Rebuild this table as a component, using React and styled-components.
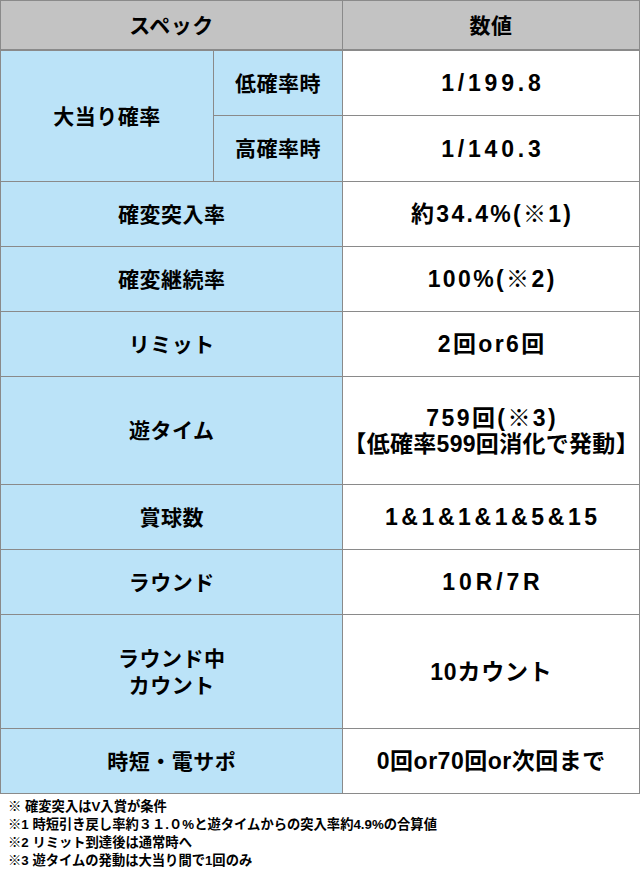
import React from "react";
import styled, { createGlobalStyle } from "styled-components";

const Global = createGlobalStyle`
  html, body { margin: 0; padding: 0; background: #fff; }
  body { font-family: "Liberation Sans", "Noto Sans CJK JP", sans-serif; color: #000; }
`;

const Page = styled.div`
  width: 640px;
`;

const Table = styled.div`
  box-sizing: border-box;
  width: 640px;
  display: grid;
  grid-template-columns: 213px 129px 297px;
  grid-template-rows: 50px 65px 66px 65px 65px 65px 108px 65px 65px 114px 65px;
  border-top: 1px solid #8a8a8a;
  border-left: 1px solid #8a8a8a;
`;

const bg = { head: "#c3c3c3", label: "#bbe3f8", value: "#ffffff" };

const Cell = styled.div`
  box-sizing: border-box;
  display: flex;
  flex-direction: column;
  align-items: center;
  justify-content: center;
  text-align: center;
  grid-column: ${(p) => p.$col || "auto"};
  grid-row: ${(p) => p.$row || "auto"};
  background: ${(p) => bg[p.$kind]};
  border-right: 1px solid #8a8a8a;
  border-bottom: ${(p) => (p.$kind === "head" ? "2px" : "1px")} solid #8a8a8a;
  font-weight: bold;
  font-size: ${(p) => (p.$kind === "value" ? "23px" : "21px")};
  line-height: ${(p) => (p.$kind === "value" ? "26px" : "27px")};
  letter-spacing: 0.5px;
`;

const Line = styled.span`
  display: block;
  letter-spacing: ${(p) => p.$ls ?? 0.5}px;
  margin-right: ${(p) => -(p.$ls ?? 0.5)}px;
`;

const Notes = styled.div`
  padding: 4px 0 0 8px;
  font-size: 13.3px;
  line-height: 18px;
  font-weight: bold;
`;

const rows = [
  [["確変突入率"], [["約34.4%(※1)", 2.3]]],
  [["確変継続率"], [["100%(※2)", 2.4]]],
  [["リミット"], [["2回or6回", 2.4]]],
  [["遊タイム"], [["759回(※3)", 2.4], ["【低確率599回消化で発動】", 0.3]]],
  [["賞球数"], [["1&1&1&1&5&15", 3.6]]],
  [["ラウンド"], [["10R/7R", 3.9]]],
  [["ラウンド中", "カウント"], [["10カウント", 0.8]]],
  [["時短・電サポ"], [["0回or70回or次回まで", 0.5]]],
];

const notes = [
  "※ 確変突入はV入賞が条件",
  "※1 時短引き戻し率約３１.０%と遊タイムからの突入率約4.9%の合算値",
  "※2 リミット到達後は通常時へ",
  "※3 遊タイムの発動は大当り間で1回のみ",
];

export default function App() {
  return (
    <Page>
      <Global />
      <Table>
        <Cell $kind="head" $col="1 / 3">スペック</Cell>
        <Cell $kind="head">数値</Cell>
        <Cell $kind="label" $col="1" $row="2 / 4">大当り確率</Cell>
        <Cell $kind="label" $col="2" $row="2">低確率時</Cell>
        <Cell $kind="value" $col="3" $row="2">
          <Line $ls={3.8}>1/199.8</Line>
        </Cell>
        <Cell $kind="label" $col="2" $row="3">高確率時</Cell>
        <Cell $kind="value" $col="3" $row="3">
          <Line $ls={3.8}>1/140.3</Line>
        </Cell>
        {rows.map(([label, value], i) => (
          <React.Fragment key={i}>
            <Cell $kind="label" $col="1 / 3">
              {label.map((l, j) => (
                <Line key={j}>{l}</Line>
              ))}
            </Cell>
            <Cell $kind="value">
              {value.map(([t, ls], j) => (
                <Line key={j} $ls={ls}>
                  {t}
                </Line>
              ))}
            </Cell>
          </React.Fragment>
        ))}
      </Table>
      <Notes>
        {notes.map((n, i) => (
          <div key={i}>{n}</div>
        ))}
      </Notes>
    </Page>
  );
}
